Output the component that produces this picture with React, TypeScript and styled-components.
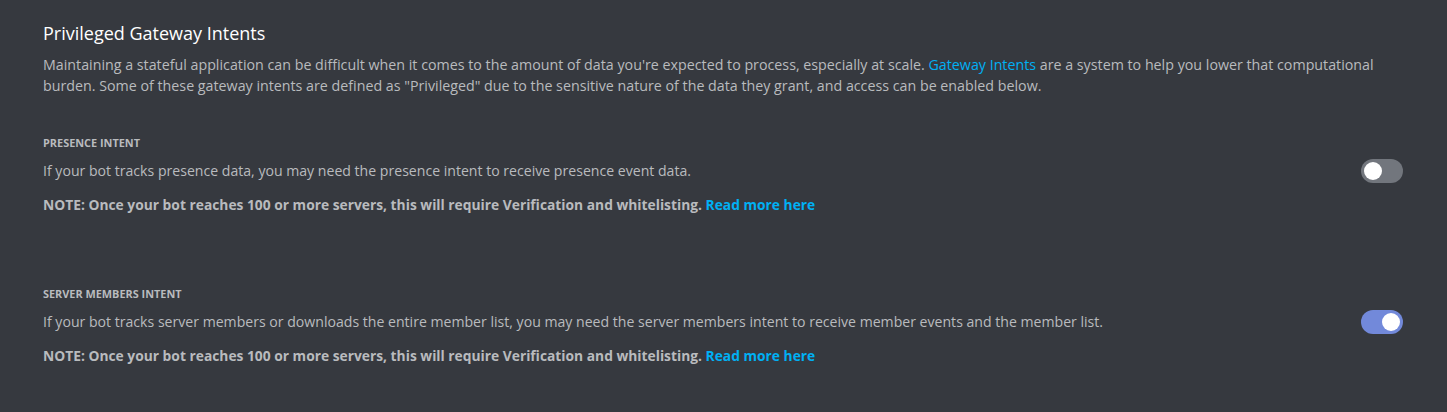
import React, { useState } from 'react';
import styled, { createGlobalStyle } from 'styled-components';

const GlobalStyle = createGlobalStyle`
  html, body {
    margin: 0;
    padding: 0;
    background-color: #36393f;
  }
  body {
    font-family: "Open Sans", "Noto Sans", sans-serif;
    color: #b9bbbe;
  }
`;

const Page = styled.div`
  min-height: 412px;
  box-sizing: border-box;
  padding: 21px 44px 20px 43px;
  background-color: #36393f;
`;

const Title = styled.h2`
  margin: 0;
  font-size: 18px;
  line-height: 24px;
  font-weight: 400;
  color: #ffffff;
`;

const Description = styled.p`
  margin: 9px 0 0;
  font-size: 14.25px;
  line-height: 21px;
  color: #b9bbbe;
`;

const Link = styled.a`
  color: #00b0f4;
  text-decoration: none;
  cursor: pointer;
`;

const Section = styled.section<{ $first?: boolean }>`
  margin-top: ${(p) => (p.$first ? '39px' : '71px')};
`;

const Label = styled.h5`
  margin: 0;
  font-size: 10.9px;
  line-height: 16px;
  font-weight: 700;
  text-transform: uppercase;
  color: #b9bbbe;
`;

const Row = styled.div`
  display: flex;
  align-items: center;
  justify-content: space-between;
  margin-top: 8px;
`;

const RowText = styled.div`
  font-size: 14.1px;
  line-height: 20px;
  color: #b9bbbe;
`;

const Note = styled.div`
  margin-top: 12px;
  font-size: 13.8px;
  line-height: 20px;
  font-weight: 700;
  color: #b9bbbe;
`;

const Switch = styled.button<{ $on: boolean }>`
  position: relative;
  flex-shrink: 0;
  width: 42px;
  height: 24px;
  border: none;
  border-radius: 12px;
  padding: 0;
  cursor: pointer;
  background-color: ${(p) => (p.$on ? '#7289da' : '#72767d')};
  transition: background-color 0.2s;

  &::after {
    content: '';
    position: absolute;
    top: 3px;
    left: ${(p) => (p.$on ? '21px' : '3px')};
    width: 18px;
    height: 18px;
    border-radius: 50%;
    background-color: #ffffff;
    transition: left 0.2s;
  }
`;

interface IntentProps {
  label: string;
  text: string;
  initial: boolean;
  first?: boolean;
}

const Intent: React.FC<IntentProps> = ({ label, text, initial, first }) => {
  const [on, setOn] = useState(initial);
  return (
    <Section $first={first}>
      <Label>{label}</Label>
      <Row>
        <RowText>{text}</RowText>
        <Switch $on={on} onClick={() => setOn(!on)} aria-label={label} />
      </Row>
      <Note>
        NOTE: Once your bot reaches 100 or more servers, this will require Verification and whitelisting.{' '}
        <Link>Read more here</Link>
      </Note>
    </Section>
  );
};

const App: React.FC = () => {
  return (
    <>
      <GlobalStyle />
      <Page>
        <Title>Privileged Gateway Intents</Title>
        <Description>
          Maintaining a stateful application can be difficult when it comes to the amount of data you're expected to
          process, especially at scale. <Link>Gateway Intents</Link> are a system to help you lower that computational
          burden. Some of these gateway intents are defined as "Privileged" due to the sensitive nature of the data they
          grant, and access can be enabled below.
        </Description>
        <Intent
          first
          label="Presence Intent"
          text="If your bot tracks presence data, you may need the presence intent to receive presence event data."
          initial={false}
        />
        <Intent
          label="Server Members Intent"
          text="If your bot tracks server members or downloads the entire member list, you may need the server members intent to receive member events and the member list."
          initial={true}
        />
      </Page>
    </>
  );
};

export default App;
